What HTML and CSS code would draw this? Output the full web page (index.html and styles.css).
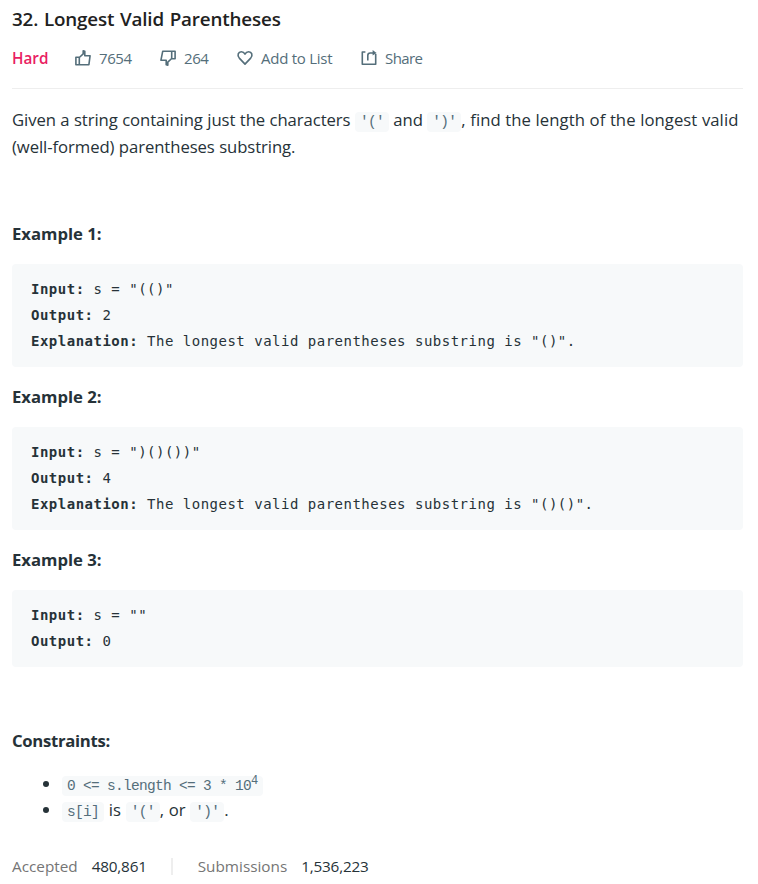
FILE: index.html
```html
<!DOCTYPE html>
<html lang="en">
<head>
<meta charset="utf-8">
<title>32. Longest Valid Parentheses</title>
<link rel="stylesheet" href="styles.css">
</head>
<body>
<main class="problem">
  <h1 class="title">32. Longest Valid Parentheses</h1>
  <div class="meta">
    <span class="difficulty">Hard</span>
    <span class="action likes">
      <svg class="icon" width="18" height="18" viewBox="0 0 18 18"><path d="M1.9 8.2h3.4v7.5H1.9zM5.3 8.5 9.2 4.9V1.8l1.6.4v4.5h5.3l-1.2 9H5.3"/></svg>
      <span class="count">7654</span>
    </span>
    <span class="action dislikes">
      <svg class="icon" width="18" height="18" viewBox="0 0 18 18"><path d="M16.1 9.8h-3.4V2.3h3.4zM12.7 9.5 8.8 13.1v3.1l-1.6-.4v-4.5H1.9l1.8-9h9"/></svg>
      <span class="count">264</span>
    </span>
    <span class="action add">
      <svg class="icon" width="18" height="18" viewBox="0 0 18 18"><path d="M9 15.1 3.3 9.1C.8 6.2 2.3 2.8 5.3 2.8 7.2 2.8 8.3 3.8 9 5.1 9.7 3.8 10.8 2.8 12.7 2.8c3 0 4.5 3.4 2 6.3z"/></svg>
      <span>Add to List</span>
    </span>
    <span class="action share">
      <svg class="icon" width="18" height="18" viewBox="0 0 18 18"><path d="M5.4 3H2.3v12.2h13.4V5M7.8 11.6V6.4Q7.8 4 10.2 4H14"/><path class="head" d="M12.6.9 16.6 4l-4 2.6z"/></svg>
      <span class="share-label">Share</span>
    </span>
  </div>
  <p class="statement">Given a string containing just the characters <code>'('</code> and <code>')'</code><span class="tail">, find the length of the longest valid</span> (well-formed) parentheses substring.</p>

  <h2 class="first">Example 1:</h2>
  <pre><b>Input:</b> s = "(()"
<b>Output:</b> 2
<b>Explanation:</b> The longest valid parentheses substring is "()".</pre>
  <h2>Example 2:</h2>
  <pre><b>Input:</b> s = ")()())"
<b>Output:</b> 4
<b>Explanation:</b> The longest valid parentheses substring is "()()".</pre>
  <h2>Example 3:</h2>
  <pre><b>Input:</b> s = ""
<b>Output:</b> 0</pre>
  <h2 class="constraints">Constraints:</h2>
  <ul>
    <li><code>0 &lt;= s.length &lt;= 3 * 10<sup>4</sup></code></li>
    <li><code>s[i]</code> is <code>'('</code>, or <code>')'</code>.</li>
  </ul>
  <footer class="stats">
    <span class="label">Accepted</span><span class="value">480,861</span>
    <span class="divider"></span>
    <span class="label">Submissions</span><span class="value">1,536,223</span>
  </footer>
</main>
</body>
</html>
```
FILE: styles.css
```css
* { box-sizing: border-box; }
body {
  margin: 0;
  background: #fff;
  color: #263238;
  font: 16.7px/27px "Open Sans", "Noto Sans", sans-serif;
}
.problem { width: 743px; padding: 4px 0 0 12px; }
.title {
  margin: 0;
  color: #212121;
  font-size: 18.8px;
  font-weight: 600;
  line-height: 30px;
  letter-spacing: -0.15px;
  word-spacing: 1px;
}
.meta {
  display: flex;
  align-items: center;
  height: 55px;
  padding-bottom: 6px;
  border-bottom: 1px solid #eee;
  color: #546e7a;
  font-size: 15px;
  letter-spacing: -0.25px;
}
.difficulty { width: 62px; color: #e91e63; font-size: 15.3px; font-weight: 600; letter-spacing: 0; }
.action { display: flex; align-items: center; gap: 7px; }
.likes { width: 85px; }
.dislikes { width: 77px; }
.add { width: 124px; }
.count { letter-spacing: -0.4px; }
.share-label { letter-spacing: -0.6px; }
.icon { flex: none; fill: none; stroke: #546e7a; stroke-width: 1.6; stroke-linejoin: round; }
.icon .head { fill: #546e7a; stroke: none; }
.statement { margin: 17px 0 60px; letter-spacing: -0.08px; word-spacing: 0.2px; }
.tail { letter-spacing: 0.05px; }
h2 { margin: 16px 0 17px; font-size: 16.7px; font-weight: 700; line-height: 27px; }
pre {
  margin: 0;
  padding: 12px 18px 13px 19px;
  border-radius: 4px;
  background: #f7f9fa;
  font: 14px/26px "DejaVu Sans Mono", monospace;
  letter-spacing: 0.5px;
}
code {
  padding: 2px 5px;
  border-radius: 4px;
  background: #f7f9fa;
  color: #546e7a;
  font: 14.5px/17px "Liberation Mono", monospace;
  letter-spacing: -0.7px;
  word-spacing: 0;
}
.constraints { margin: 60px 0 17px; letter-spacing: -0.3px; }
ul { margin: 0; padding-left: 50px; line-height: 26px; word-spacing: 0.4px; }
li { height: 26px; }
sup { font-size: 12px; line-height: 0; vertical-align: 6px; }
.stats { display: flex; align-items: center; height: 26px; margin-top: 30px; font-size: 15.3px; letter-spacing: 0; }
.label { color: #757575; }
.value { margin-left: 14px; letter-spacing: -0.2px; }
.divider { width: 2px; height: 17px; margin: 0 25px 0 24px; background: #eee; }
```
